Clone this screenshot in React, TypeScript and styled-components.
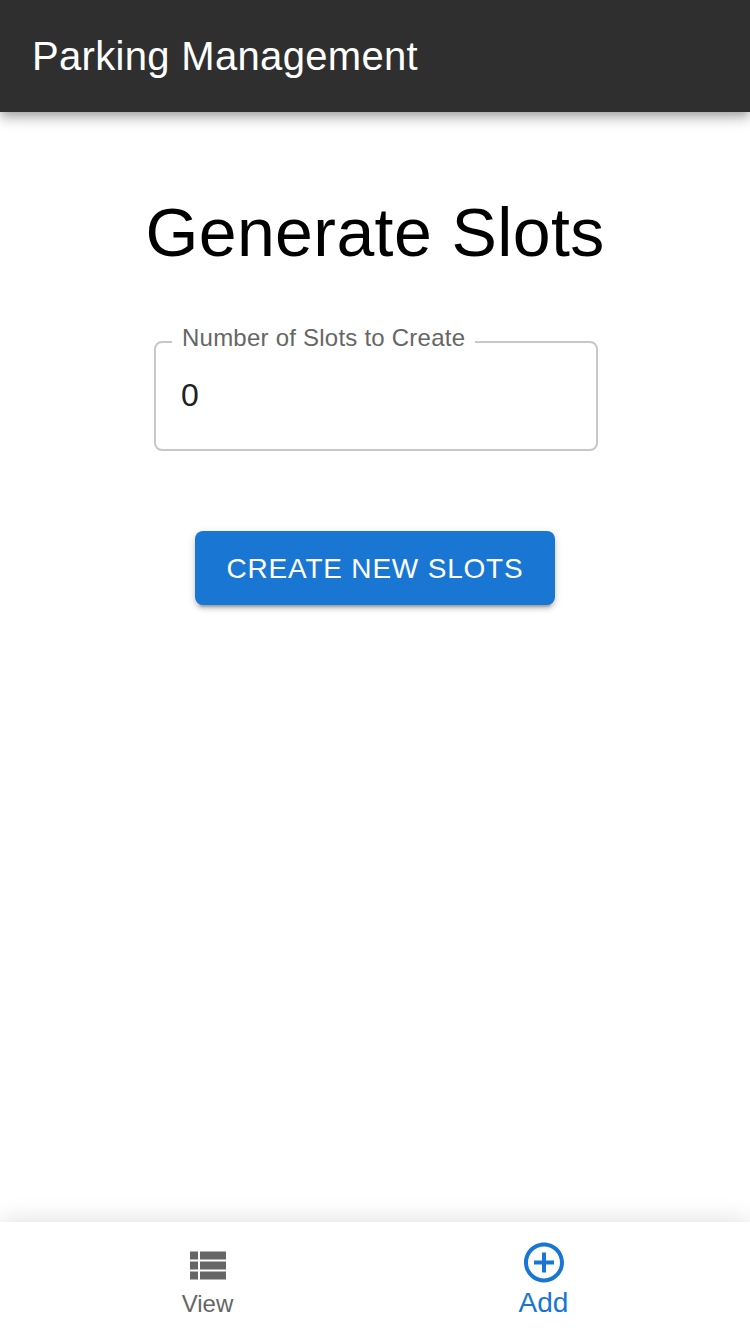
import React from "react";
import styled, { createGlobalStyle } from "styled-components";

const GlobalStyle = createGlobalStyle`
  * { box-sizing: border-box; }
  body { margin: 0; background: #fff; font-family: "Liberation Sans", Arial, sans-serif; }
`;

const Page = styled.div`
  height: 1333px;
  display: flex;
  flex-direction: column;
  overflow: hidden;
`;

const AppBar = styled.header`
  height: 112px;
  flex: none;
  display: flex;
  align-items: center;
  padding: 0 32px;
  background: #2f2f2f;
  color: #fff;
  box-shadow: 0 4px 8px -2px rgba(0, 0, 0, 0.2), 0 8px 10px rgba(0, 0, 0, 0.14), 0 2px 20px rgba(0, 0, 0, 0.12);
`;

const AppTitle = styled.div`
  font-size: 40px;
  line-height: 64px;
  letter-spacing: 0.32px;
`;

const Main = styled.main`
  flex: 1;
  display: flex;
  flex-direction: column;
  align-items: center;
`;

const Heading = styled.h1`
  margin: 80px 0 0;
  font-size: 68px;
  line-height: 80px;
  font-weight: 400;
  letter-spacing: 0.4px;
  color: #000;
  white-space: nowrap;
`;

const Field = styled.fieldset`
  width: 444px;
  height: 127px;
  margin: 52px 0 0 2px;
  padding: 0 25px;
  border: 2px solid #c8c8c8;
  border-radius: 8px;
  min-width: 0;
`;

const Legend = styled.legend`
  margin-left: -9px;
  padding: 0 10px 8px;
  font-size: 24px;
  line-height: 28px;
  letter-spacing: 0.23px;
  color: #666;
`;

const Input = styled.input`
  display: block;
  width: 100%;
  margin-top: 12px;
  padding: 0;
  border: 0;
  outline: 0;
  background: transparent;
  font: 32px/46px "Liberation Sans", Arial, sans-serif;
  color: #212121;
`;

const Button = styled.button`
  width: 360px;
  height: 74px;
  margin-top: 80px;
  padding: 0;
  border: 0;
  border-radius: 8px;
  background: #1976d2;
  color: #fff;
  font: 28px/49px "Liberation Sans", Arial, sans-serif;
  letter-spacing: 0.8px;
  text-transform: uppercase;
  box-shadow: 0 6px 2px -4px rgba(0, 0, 0, 0.2), 0 4px 4px rgba(0, 0, 0, 0.14), 0 2px 10px rgba(0, 0, 0, 0.12);
`;

const BottomNav = styled.nav`
  height: 111px;
  flex: none;
  display: flex;
  justify-content: center;
  background: #fff;
  box-shadow: 0 0 24px rgba(0, 0, 0, 0.14);
`;

const NavItem = styled.div<{ $active?: boolean }>`
  width: 336px;
  display: flex;
  flex-direction: column;
  align-items: center;
  padding: ${(p) => (p.$active ? "16px" : "19px")} 0 0 1px;
  color: ${(p) => (p.$active ? "#1976d2" : "#666")};
  font-size: ${(p) => (p.$active ? 28 : 24)}px;
  line-height: ${(p) => (p.$active ? 32 : 28)}px;
`;

const Icon = styled.svg`
  width: 48px;
  height: 48px;
  margin: 0 0 1px 1px;
  fill: currentColor;
`;

export default function App() {
  return (
    <>
      <GlobalStyle />
      <Page>
        <AppBar><AppTitle>Parking Management</AppTitle></AppBar>
        <Main>
          <Heading>Generate Slots</Heading>
          <Field>
            <Legend>Number of Slots to Create</Legend>
            <Input defaultValue="0" aria-label="Number of Slots to Create" />
          </Field>
          <Button>Create new slots</Button>
        </Main>
        <BottomNav>
          <NavItem>
            <Icon viewBox="0 -0.2 24 24"><path d="M3 14h4v-4H3v4zm0 5h4v-4H3v4zM3 9h4V5H3v4zm5 5h13v-4H8v4zm0 5h13v-4H8v4zM8 5v4h13V5H8z" /></Icon>
            View
          </NavItem>
          <NavItem $active>
            <Icon viewBox="0 -0.2 24 24"><path d="M13 7h-2v4H7v2h4v4h2v-4h4v-2h-4V7zm-1-5C6.48 2 2 6.48 2 12s4.48 10 10 10 10-4.48 10-10S17.52 2 12 2zm0 18c-4.41 0-8-3.59-8-8s3.59-8 8-8 8 3.59 8 8-3.59 8-8 8z" /></Icon>
            Add
          </NavItem>
        </BottomNav>
      </Page>
    </>
  );
}
